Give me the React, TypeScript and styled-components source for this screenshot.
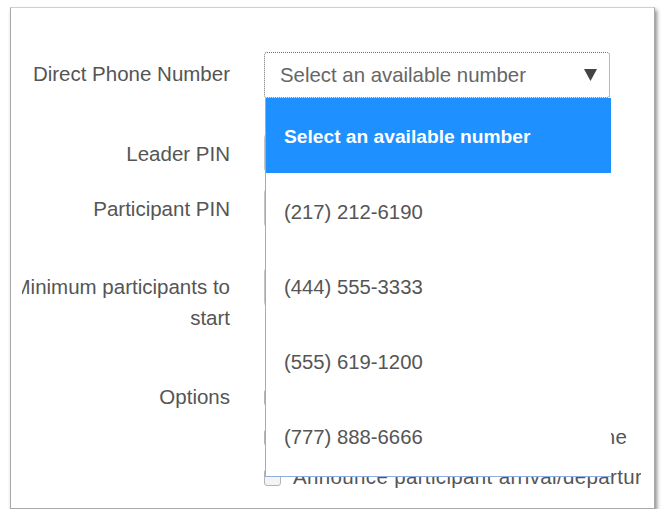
import { FunctionComponent } from "react";
import styled, { createGlobalStyle } from "styled-components";

const GlobalStyle = createGlobalStyle`
    html, body {
        margin: 0;
        padding: 0;
        background: #ffffff;
    }

    body {
        font-family: "Liberation Sans", Arial, sans-serif;
        color: #555555;
    }
`;

const Frame = styled.div`
    box-sizing: border-box;
    width: 645px;
    height: 502px;
    margin: 7px 0 0 10px;
    background: #ffffff;
    border: 1px solid #a9a9a9;
    border-top-color: #d0d0d0;
    box-shadow: 2px 3px 4px rgba(0, 0, 0, 0.45);
`;

const Form = styled.div`
    width: 619px;
    height: 100%;
    margin-left: 11px;
    padding-top: 44px;
    box-sizing: border-box;
    overflow: hidden;
`;

const Row = styled.div<{ $gap?: number; $height?: number; $center?: boolean }>`
    display: flex;
    align-items: ${(props) => (props.$center ? "center" : "flex-start")};
    margin-top: ${(props) => props.$gap ?? 0}px;
    height: ${(props) => (props.$height ? `${props.$height}px` : "auto")};
`;

const Label = styled.div<{ $pad?: number; $line?: number }>`
    flex-shrink: 0;
    box-sizing: border-box;
    width: 226px;
    margin-left: -18px;
    padding-top: ${(props) => props.$pad ?? 0}px;
    text-align: right;
    font-size: 20.5px;
    line-height: ${(props) => props.$line ?? 31}px;
    color: #555555;
`;

const Field = styled.div`
    position: relative;
    margin-left: 34px;
    display: flex;
    align-items: center;
`;

const SelectBox = styled.div`
    box-sizing: border-box;
    width: 346px;
    height: 46px;
    display: flex;
    align-items: center;
    justify-content: space-between;
    padding: 0 12px 0 15px;
    border: 1px dotted #6f6f6f;
    border-radius: 3px;
    font-size: 20.4px;
    color: #666666;
    background: #ffffff;
`;

const OptionList = styled.ul`
    position: absolute;
    top: 46px;
    left: 1px;
    z-index: 2;
    box-sizing: border-box;
    width: 346px;
    margin: 0;
    padding: 0 0 3px;
    list-style: none;
    background: #ffffff;
    border-left: 1px solid #8eaee0;
    border-bottom: 1px solid #8eaee0;
`;

const OptionItem = styled.li<{ $active?: boolean }>`
    box-sizing: border-box;
    height: 75px;
    display: flex;
    align-items: center;
    padding: 3px 0 0 18px;
    font-size: ${(props) => (props.$active ? "19.2px" : "20.3px")};
    font-weight: ${(props) => (props.$active ? 700 : 400)};
    color: ${(props) => (props.$active ? "#ffffff" : "#555555")};
    background: ${(props) => (props.$active ? "#1e90ff" : "transparent")};
`;

const TextInput = styled.input`
    box-sizing: border-box;
    width: 346px;
    height: 42px;
    border: 1px solid #c4c4c4;
    border-radius: 6px;
    background: #ffffff;
    font: inherit;
`;

const CheckBox = styled.span`
    flex-shrink: 0;
    box-sizing: border-box;
    width: 17px;
    height: 17px;
    border: 1px solid #b4b4b4;
    border-radius: 3px;
    background: #f4f4f4;
`;

const CheckText = styled.span`
    margin-left: 12px;
    white-space: nowrap;
    font-size: 20.5px;
    letter-spacing: 0.35px;
    color: #555555;
`;

const numbers = ["(217) 212-6190", "(444) 555-3333", "(555) 619-1200", "(777) 888-6666"];

const Arrow: FunctionComponent = () => (
    <svg width="13" height="12" viewBox="0 0 13 12">
        <path d="M0 0 H13 L6.5 12 Z" fill="#444444" />
    </svg>
);

const App: FunctionComponent = () => (
    <>
        <GlobalStyle />
        <Frame>
            <Form>
                <Row>
                    <Label $pad={6}>Direct Phone Number</Label>
                    <Field>
                        <SelectBox>
                            <span>Select an available number</span>
                            <Arrow />
                        </SelectBox>
                        <OptionList>
                            <OptionItem $active>Select an available number</OptionItem>
                            {numbers.map(n => (
                                <OptionItem key={n}>{n}</OptionItem>
                            ))}
                        </OptionList>
                    </Field>
                </Row>
                <Row $gap={34}>
                    <Label $pad={6}>Leader PIN</Label>
                    <Field>
                        <TextInput />
                    </Field>
                </Row>
                <Row $gap={13}>
                    <Label $pad={6}>Participant PIN</Label>
                    <Field>
                        <TextInput />
                    </Field>
                </Row>
                <Row $gap={37} $height={68}>
                    <Label $pad={5}>Minimum participants to start</Label>
                    <Field>
                        <TextInput />
                    </Field>
                </Row>
                <Row $gap={43} $height={40} $center>
                    <Label $line={40}>Options</Label>
                    <Field>
                        <CheckBox />
                        <CheckText>Play music on hold</CheckText>
                    </Field>
                </Row>
                <Row $height={40} $center>
                    <Label $line={40} />
                    <Field>
                        <CheckBox />
                        <CheckText>Allow participant to dial in by phone</CheckText>
                    </Field>
                </Row>
                <Row $height={40} $center>
                    <Label $line={40} />
                    <Field>
                        <CheckBox />
                        <CheckText>Announce participant arrival/departure</CheckText>
                    </Field>
                </Row>
            </Form>
        </Frame>
    </>
);

export default App;
